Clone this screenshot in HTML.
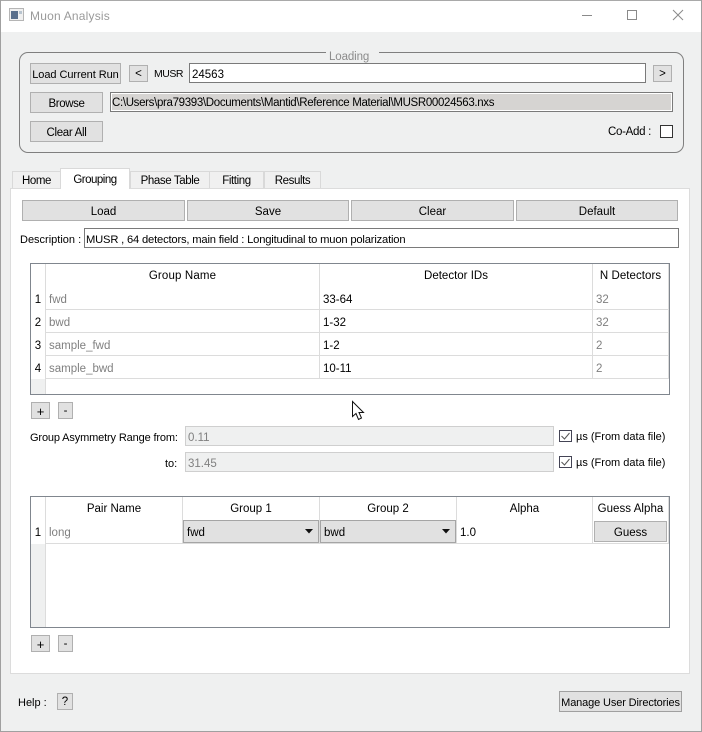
<!DOCTYPE html>
<html><head><meta charset="utf-8"><style>
html,body{margin:0;padding:0;background:#eff0f0}
#w{position:relative;width:702px;height:732px;overflow:hidden;background:#eff0f0;font:11.5px "Liberation Sans",sans-serif;color:#000}
#w div{position:absolute;box-sizing:border-box;white-space:nowrap}
.t{line-height:16px;height:16px}
.c{text-align:center}
.b{background:#e1e1e1;border:1px solid #b0b0b0;text-align:center;padding-top:2px}
.i{background:#fff;border:1px solid #7a7a7a;padding-left:4px;padding-top:2px}
.g{color:#808080}
.h{background:#dcdcdc}
.tab{background:#f0f0f0;border:1px solid #d9d9d9;border-bottom:0;text-align:center;line-height:16px;padding-top:1px;letter-spacing:-.4px}
</style></head><body><div id="w">
<div style="left:0;top:0;width:702px;height:32px;background:#fff"></div>
<div style="left:0;top:0;width:702px;height:1px;background:#a9a9a9"></div>
<div style="left:0;top:0;width:1px;height:732px;background:#a0a0a0"></div>
<div style="left:701px;top:0;width:1px;height:732px;background:#a0a0a0"></div>
<div style="left:0;top:731px;width:702px;height:1px;background:#a0a0a0"></div>
<svg style="position:absolute;left:9px;top:8px" width="16" height="14"><rect x=".5" y=".5" width="14" height="12" fill="#f0f0f0" stroke="#b5b5b5"/><rect x="2" y="3" width="7" height="8" fill="#5a6f8c"/><rect x="10" y="3" width="3" height="3" fill="#b8c4cf"/></svg>
<div class="t" style="left:30px;top:8px;font-size:12px;color:#9a9a9a;letter-spacing:.2px">Muon Analysis</div>
<svg style="position:absolute;left:580px;top:8px" width="112" height="16" fill="none" stroke="#8a8a8a"><path d="M2 7.500H12"/><rect x="47.500" y="2.500" width="9" height="9"/><path d="M93 2L103 12M103 2L93 12"/></svg>

<div style="left:19px;top:52px;width:665px;height:101px;border:1px solid #7f7f7f;border-radius:9px"></div>
<div style="left:326px;top:48px;width:53px;height:8px;background:#eff0f0"></div>
<div class="t g" style="left:329px;top:49px;color:#8c8c8c;letter-spacing:-.1px">Loading</div>
<div class="b" style="left:30px;top:63px;width:91px;height:21px;line-height:19px;font-size:11px;letter-spacing:-.06px">Load Current Run</div>
<div class="b" style="left:129px;top:65px;width:19px;height:17px;line-height:15px;padding-top:1px">&lt;</div>
<div class="t" style="left:154px;top:66px;font-size:10.5px;letter-spacing:-.5px">MUSR</div>
<div class="i" style="left:189px;top:63px;width:457px;height:20px;line-height:18px;padding-left:2px">24563</div>
<div class="b" style="left:653px;top:65px;width:19px;height:17px;line-height:15px;padding-top:1px">&gt;</div>
<div class="b" style="left:30px;top:92px;width:73px;height:21px;line-height:19px;letter-spacing:-.4px">Browse</div>
<div class="i" style="left:110px;top:92px;width:563px;height:20px;line-height:16px;background:#d6d4d2;padding-left:1px;box-shadow:inset 0 0 0 1px #fff;letter-spacing:-.33px">C:\Users\pra79393\Documents\Mantid\Reference Material\MUSR00024563.nxs</div>
<div class="b" style="left:30px;top:121px;width:73px;height:21px;line-height:19px;letter-spacing:-.3px">Clear All</div>
<div class="t" style="left:608px;top:124px;letter-spacing:-.3px">Co-Add :</div>
<div style="left:660px;top:125px;width:13px;height:13px;background:#fff;border:1px solid #333"></div>

<div style="left:10px;top:188px;width:680px;height:486px;background:#fff;border:1px solid #dcdcdc"></div>
<div class="tab" style="left:12px;top:171px;width:49px;height:17px">Home</div>
<div class="tab" style="left:130px;top:171px;width:80px;height:17px">Phase Table</div>
<div class="tab" style="left:209px;top:171px;width:55px;height:17px">Fitting</div>
<div class="tab" style="left:264px;top:171px;width:57px;height:17px">Results</div>
<div class="tab" style="left:60px;top:168px;width:70px;height:21px;background:#fff;line-height:20px;letter-spacing:-.5px">Grouping</div>

<div class="b" style="left:22px;top:200px;width:163px;height:21px;line-height:19px">Load</div>
<div class="b" style="left:187px;top:200px;width:162px;height:21px;line-height:19px">Save</div>
<div class="b" style="left:351px;top:200px;width:163px;height:21px;line-height:19px">Clear</div>
<div class="b" style="left:516px;top:200px;width:162px;height:21px;line-height:19px">Default</div>
<div class="t" style="left:20px;top:232px;font-size:11px">Description :</div>
<div class="i" style="left:84px;top:228px;width:595px;height:20px;line-height:18px;padding-left:1px;font-size:11.2px;letter-spacing:-.18px">MUSR , 64 detectors, main field : Longitudinal to muon polarization</div>

<div style="left:30px;top:263px;width:640px;height:132px;background:#fff;border:1px solid #80868e"></div>
<div style="left:31px;top:379px;width:14px;height:15px;background:#eff0f0"></div>
<div class="h" style="left:45px;top:264px;width:1px;height:130px"></div>
<div class="h" style="left:319px;top:264px;width:1px;height:115px"></div>
<div class="h" style="left:592px;top:264px;width:1px;height:115px"></div>
<div class="h" style="left:668px;top:264px;width:1px;height:115px"></div>
<div class="h" style="left:45px;top:309px;width:624px;height:1px"></div>
<div class="h" style="left:45px;top:332px;width:624px;height:1px"></div>
<div class="h" style="left:45px;top:355px;width:624px;height:1px"></div>
<div class="h" style="left:45px;top:378px;width:624px;height:1px"></div>
<div class="t c" style="left:46px;top:268px;width:273px;letter-spacing:.15px">Group Name</div>
<div class="t c" style="left:320px;top:268px;width:272px">Detector IDs</div>
<div class="t c" style="left:593px;top:268px;width:75px;font-size:11.5px;letter-spacing:.05px">N Detectors</div>
<div class="t c" style="left:31px;top:292px;width:14px">1</div><div class="t g" style="left:49px;top:292px">fwd</div><div class="t" style="left:323px;top:292px">33-64</div><div class="t g" style="left:596px;top:292px">32</div>
<div class="t c" style="left:31px;top:315px;width:14px">2</div><div class="t g" style="left:49px;top:315px">bwd</div><div class="t" style="left:323px;top:315px">1-32</div><div class="t g" style="left:596px;top:315px">32</div>
<div class="t c" style="left:31px;top:338px;width:14px">3</div><div class="t g" style="left:49px;top:338px">sample_fwd</div><div class="t" style="left:323px;top:338px">1-2</div><div class="t g" style="left:596px;top:338px">2</div>
<div class="t c" style="left:31px;top:361px;width:14px">4</div><div class="t g" style="left:49px;top:361px">sample_bwd</div><div class="t" style="left:323px;top:361px">10-11</div><div class="t g" style="left:596px;top:361px">2</div>

<div class="b" style="left:31px;top:402px;width:19px;height:17px;line-height:15px;font-size:13px;padding-top:1px">+</div>
<div class="b" style="left:58px;top:402px;width:15px;height:17px;line-height:15px;padding-top:1px">-</div>
<svg style="position:absolute;left:351px;top:400px" width="14" height="21"><path d="M1.500 1.500V16.500L5 13.500L7.500 19.500L10.500 18L8 12.500H12.500Z" fill="#fff" stroke="#111"/></svg>

<div class="t" style="left:30px;top:430px;font-size:11px;letter-spacing:-.14px">Group Asymmetry Range from:</div>
<div class="i" style="left:185px;top:426px;width:369px;height:20px;line-height:18px;background:#eff0f0;border-color:#cfcfcf;padding-left:2px;color:#808080">0.11</div>
<div style="left:559px;top:430px;width:13px;height:12px;background:#fff;border:1px solid #445"></div>
<svg style="position:absolute;left:560px;top:431px" width="11" height="10" fill="none" stroke="#555"><path d="M1.500 5L4.500 8L9.500 2"/></svg>
<div class="t" style="left:576px;top:429px;font-size:11px">µs (From data file)</div>
<div class="t" style="left:165px;top:456px;font-size:11px">to:</div>
<div class="i" style="left:185px;top:452px;width:369px;height:20px;line-height:18px;background:#eff0f0;border-color:#cfcfcf;padding-left:2px;color:#808080">31.45</div>
<div style="left:559px;top:456px;width:13px;height:12px;background:#fff;border:1px solid #445"></div>
<svg style="position:absolute;left:560px;top:457px" width="11" height="10" fill="none" stroke="#555"><path d="M1.500 5L4.500 8L9.500 2"/></svg>
<div class="t" style="left:576px;top:455px;font-size:11px">µs (From data file)</div>

<div style="left:30px;top:496px;width:640px;height:132px;background:#fff;border:1px solid #80868e"></div>
<div style="left:31px;top:544px;width:14px;height:83px;background:#eff0f0"></div>
<div class="h" style="left:45px;top:497px;width:1px;height:130px"></div>
<div class="h" style="left:182px;top:497px;width:1px;height:47px"></div>
<div class="h" style="left:319px;top:497px;width:1px;height:47px"></div>
<div class="h" style="left:456px;top:497px;width:1px;height:47px"></div>
<div class="h" style="left:592px;top:497px;width:1px;height:47px"></div>
<div class="h" style="left:668px;top:497px;width:1px;height:47px"></div>
<div class="h" style="left:45px;top:543px;width:624px;height:1px"></div>
<div class="t c" style="left:46px;top:501px;width:136px">Pair Name</div>
<div class="t c" style="left:183px;top:501px;width:136px">Group 1</div>
<div class="t c" style="left:320px;top:501px;width:136px">Group 2</div>
<div class="t c" style="left:457px;top:501px;width:135px">Alpha</div>
<div class="t c" style="left:593px;top:501px;width:75px;font-size:11.5px;letter-spacing:.05px">Guess Alpha</div>
<div class="t c" style="left:31px;top:525px;width:14px">1</div>
<div class="t g" style="left:49px;top:525px">long</div>
<div class="b" style="left:183px;top:520px;width:136px;height:23px;line-height:21px;text-align:left;padding-left:3px;border-color:#a5a5a5">fwd</div>
<div class="b" style="left:320px;top:520px;width:136px;height:23px;line-height:21px;text-align:left;padding-left:3px;border-color:#a5a5a5">bwd</div>
<svg style="position:absolute;left:305px;top:529px" width="9" height="5"><path d="M0 0H8L4 4.500Z" fill="#111"/></svg>
<svg style="position:absolute;left:442px;top:529px" width="9" height="5"><path d="M0 0H8L4 4.500Z" fill="#111"/></svg>
<div class="t" style="left:460px;top:525px">1.0</div>
<div class="b" style="left:594px;top:521px;width:73px;height:21px;line-height:19px">Guess</div>
<div class="b" style="left:31px;top:635px;width:19px;height:17px;line-height:15px;font-size:13px;padding-top:1px">+</div>
<div class="b" style="left:58px;top:635px;width:15px;height:17px;line-height:15px;padding-top:1px">-</div>

<div class="t" style="left:18px;top:695px;font-size:11px">Help :</div>
<div class="b" style="left:57px;top:693px;width:16px;height:17px;line-height:15px;padding-top:1px">?</div>
<div class="b" style="left:559px;top:691px;width:123px;height:21px;line-height:19px;font-size:11px;border-color:#a0a0a0;letter-spacing:-.13px">Manage User Directories</div>
</div></body></html>
